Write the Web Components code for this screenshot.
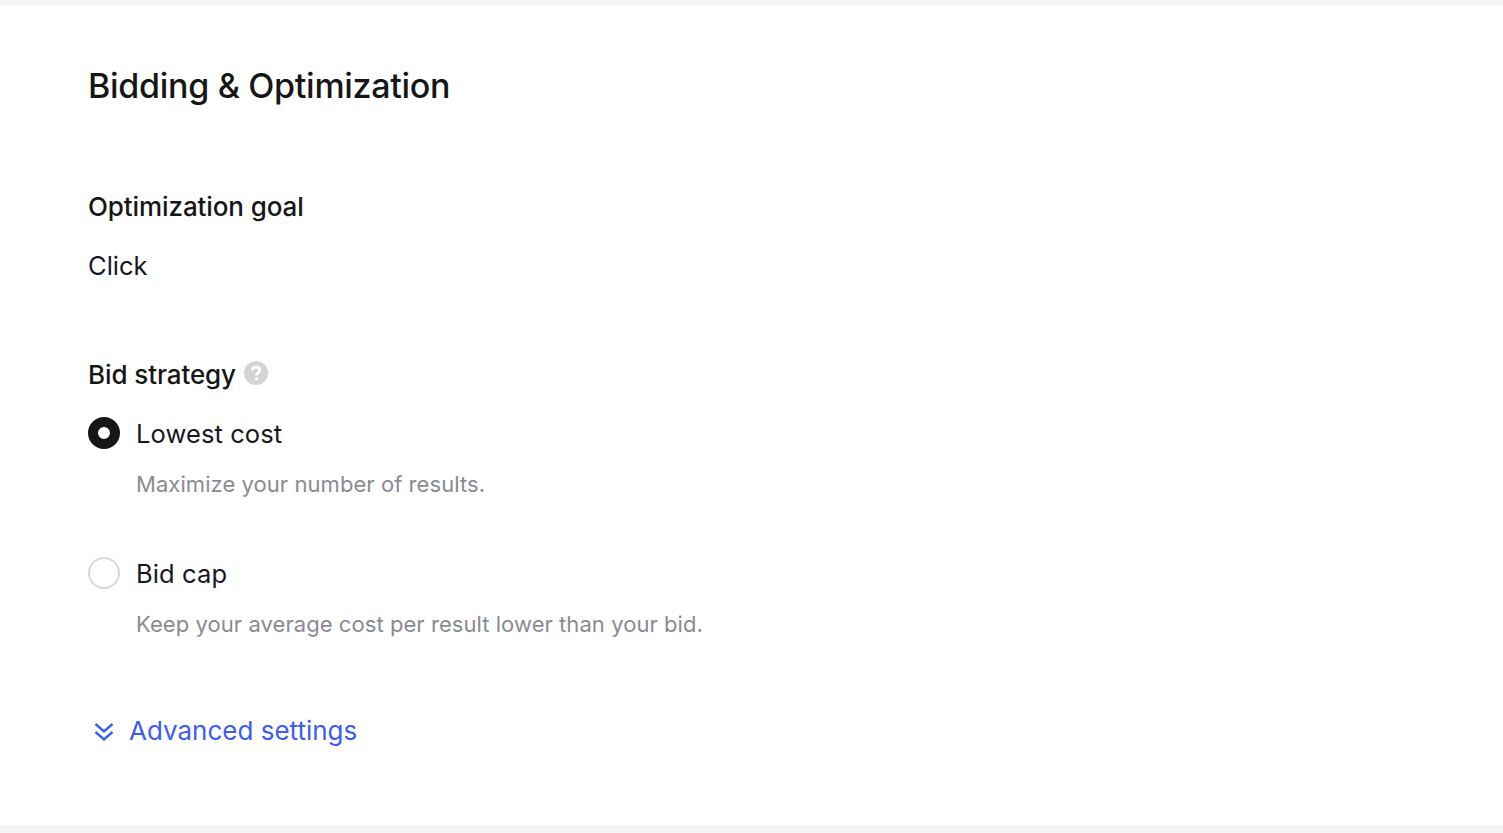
<!DOCTYPE html>
<html lang="en">
<head>
<meta charset="utf-8">
<title>Bidding &amp; Optimization</title>
<style>
  html, body { margin: 0; height: 100%; background: #f5f5f5; }
  body { font-family: Inter, "Liberation Sans", sans-serif; color: #161823; overflow: hidden; }
</style>
</head>
<body>
<bid-panel>
  <span slot="title">Bidding &amp; Optimization</span>
  <form-section label="Optimization goal">
    <div style="font-size:25.5px;line-height:32px">Click</div>
  </form-section>
  <form-section label="Bid strategy" help style="margin-top:76px;--label-gap:27px">
    <radio-option checked label="Lowest cost" hint="Maximize your number of results."></radio-option>
    <radio-option label="Bid cap" hint="Keep your average cost per result lower than your bid."></radio-option>
  </form-section>
  <advanced-link>Advanced settings</advanced-link>
</bid-panel>
<script>
class BidPanel extends HTMLElement {
  connectedCallback() {
    this.attachShadow({ mode: 'open' });
    this.shadowRoot.innerHTML = `
      <style>
        :host { display: block; box-sizing: border-box; height: 820px; margin-top: 5px; background: #fff; padding: 60px 88px 0; }
        h2 { margin: 0 0 83px; font-size: 34px; line-height: 42px; font-weight: 500; letter-spacing: -.3px; color: #161616; }
      </style>
      <h2><slot name="title"></slot></h2>
      <slot></slot>`;
  }
}
class FormSection extends HTMLElement {
  connectedCallback() {
    this.attachShadow({ mode: 'open' });
    const help = this.hasAttribute('help') ? `
      <svg width="24" height="24" viewBox="0 0 24 24" aria-hidden="true">
        <circle cx="12" cy="12" r="12" fill="#d4d4d4"/>
        <path d="M8.300 9.600c.1-2.100 1.700-3.400 3.800-3.400 2.200 0 3.700 1.300 3.700 3.100 0 1.400-.8 2.100-1.800 2.800-.9.6-1.500 1.100-1.500 2v.5" fill="none" stroke="#fff" stroke-width="2.700"/>
        <circle cx="12.500" cy="18" r="1.700" fill="#fff"/>
      </svg>` : '';
    this.shadowRoot.innerHTML = `
      <style>
        :host { display: block; }
        .label { display: flex; align-items: center; gap: 8px; height: 32px; margin-bottom: var(--label-gap, 28px); font-size: 26px; font-weight: 500; letter-spacing: -.1px; color: #161616; }
        svg { margin-top: -2px; }
      </style>
      <div class="label"><span>${this.getAttribute('label')}</span>${help}</div>
      <slot></slot>`;
  }
}
class RadioOption extends HTMLElement {
  connectedCallback() {
    this.attachShadow({ mode: 'open' });
    const on = this.hasAttribute('checked');
    this.shadowRoot.innerHTML = `
      <style>
        :host { display: block; margin-bottom: 57px; }
        .row { display: flex; align-items: center; gap: 16px; height: 32px; font-size: 25.5px; letter-spacing: .1px; }
        .dot { box-sizing: border-box; width: 32px; height: 32px; border-radius: 50%; flex: none; background: #fff; }
        .on { border: 10px solid #161616; }
        .off { border: 2px solid #d8d8d8; }
        .hint { margin: 19px 0 0 48px; font-size: 22px; line-height: 32px; letter-spacing: .06px; color: #8a8b91; }
      </style>
      <div class="row"><span class="dot ${on ? 'on' : 'off'}"></span><span>${this.getAttribute('label')}</span></div>
      <div class="hint">${this.getAttribute('hint')}</div>`;
  }
}
class AdvancedLink extends HTMLElement {
  connectedCallback() {
    this.attachShadow({ mode: 'open' });
    this.shadowRoot.innerHTML = `
      <style>
        :host { display: flex; align-items: center; gap: 14px; height: 32px; margin-top: 74px; font-size: 26px; color: #3d5cf5; }
        svg { flex: none; margin-left: 5px; margin-top: 4px; }
      </style>
      <svg width="22" height="20" viewBox="0 0 22 20" fill="none" stroke="#3d5cf5" stroke-width="2.400" aria-hidden="true">
        <path d="M2.500 2l8.500 7.500L19.500 2"/><path d="M2.500 10l8.500 7.500 8.500-7.500"/>
      </svg>
      <slot></slot>`;
  }
}
customElements.define('bid-panel', BidPanel);
customElements.define('form-section', FormSection);
customElements.define('radio-option', RadioOption);
customElements.define('advanced-link', AdvancedLink);
</script>
</body>
</html>
